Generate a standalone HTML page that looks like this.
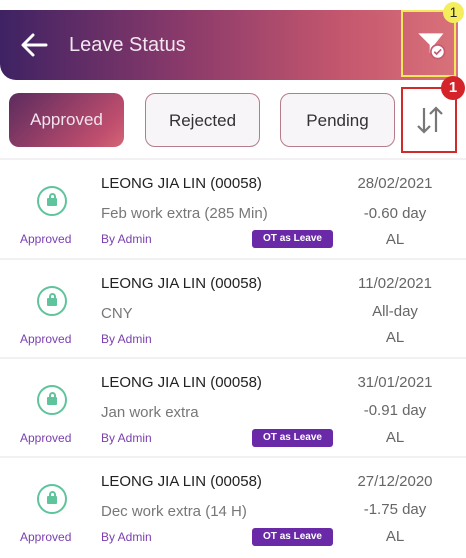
<!DOCTYPE html>
<html><head><meta charset="utf-8"><style>
*{margin:0;padding:0;box-sizing:border-box}
body{width:466px;height:557px;background:#fff;font-family:"Liberation Sans",sans-serif;position:relative;overflow:hidden}
.hdr{position:absolute;left:0;top:10px;width:458px;height:70px;border-radius:0 0 0 16px;background:linear-gradient(90deg,#3e2263 0%,#8a3a6a 40%,#c5576e 75%,#d9727a 100%)}
.hdr .t{position:absolute;left:69px;top:24px;color:#f2e6f0;font-size:20px}
.fbox{position:absolute;left:401px;top:10px;width:55px;height:67px;border:2.5px solid #f2e85c}
.b1{position:absolute;left:443px;top:2px;width:21px;height:21px;border-radius:50%;background:#f4ee5c;color:#222;font-size:14px;text-align:center;line-height:21px}
.btn{position:absolute;top:93px;height:54px;width:115px;border-radius:10px;font-size:17px;text-align:center;line-height:54px;color:#333;border:1.5px solid #b57c8c;background:#f7f5f7}
.btn.a{background:linear-gradient(135deg,#5c2b5e,#c04e6e 80%,#d26775);color:#f3e4ee;border:none}
.sbox{position:absolute;left:401px;top:87px;width:56px;height:66px;border:2.5px solid #d02a2a}
.b2{position:absolute;left:441px;top:76px;width:24px;height:24px;border-radius:50%;background:#d4242a;color:#fff;font-size:15px;font-weight:bold;text-align:center;line-height:24px}
.sep{position:absolute;left:0;width:466px;height:2px;background:#f2f0f2}
.row{position:absolute;left:0;width:466px;height:99px}
.lock{position:absolute;left:37px;top:25px;width:30px;height:30px;border-radius:50%;border:2.5px solid #5fc49c}
.lock i{position:absolute;left:8px;top:10px;width:10px;height:8px;background:#5fc49c;border-radius:1px}
.lock b{position:absolute;left:9.5px;top:5px;width:7px;height:7px;border:2px solid #5fc49c;border-bottom:none;border-radius:4px 4px 0 0}
.st{position:absolute;left:20px;top:71px;font-size:12px;color:#7a3fb0}
.nm{position:absolute;left:101px;top:14px;font-size:15px;color:#222}
.ds{position:absolute;left:101px;top:44px;font-size:15px;color:#777}
.by{position:absolute;left:101px;top:71px;font-size:12px;color:#7a3fb0}
.ot{position:absolute;left:252px;top:69px;width:81px;height:18px;background:#6a2aa8;color:#fff;font-size:10px;font-weight:bold;border-radius:3px;text-align:center;line-height:18px}
.r{position:absolute;right:26px;text-align:center;width:90px;font-size:15px;color:#666}
</style></head><body>
<div class="hdr"><svg style="position:absolute;left:20px;top:22px" width="28" height="26" viewBox="0 0 28 26"><path d="M26 13H4M13 3L3 13l10 10" stroke="#fff" stroke-width="3" fill="none" stroke-linecap="round" stroke-linejoin="round"/></svg><div class="t">Leave Status</div>
<svg style="position:absolute;left:416px;top:20px" width="32" height="32" viewBox="0 0 28 28"><path d="M2 3h22l-8 10v10l-4-3v-7z" fill="#fff"/><circle cx="19" cy="19" r="6" fill="#fff" stroke="#c85a70" stroke-width="1.5"/><path d="M16 19l2 2 4-4" stroke="#c85a70" stroke-width="1.5" fill="none"/></svg></div>
<div class="fbox"></div><div class="b1">1</div>
<div class="btn a" style="left:9px">Approved</div>
<div class="btn" style="left:145px">Rejected</div>
<div class="btn" style="left:280px">Pending</div>
<div class="sbox"><svg style="position:absolute;left:13px;top:16px" width="28" height="30" viewBox="0 0 28 30"><path d="M8 3v24M2 21l6 6 6-6M20 27V3M14 9l6-6 6 6" stroke="#777" stroke-width="2.2" fill="none"/></svg></div><div class="b2">1</div>
<div class="sep" style="top:158px"></div>
<div class="row" style="top:161px"><div class="lock"><b></b><i></i></div><div class="st">Approved</div><div class="nm">LEONG JIA LIN (00058)</div><div class="ds">Feb work extra (285 Min)</div><div class="by">By Admin</div><div class="ot">OT as Leave</div><div class="r" style="top:14px">28/02/2021</div><div class="r" style="top:44px">-0.60 day</div><div class="r" style="top:70px">AL</div></div>
<div class="sep" style="top:258px"></div>
<div class="row" style="top:261px"><div class="lock"><b></b><i></i></div><div class="st">Approved</div><div class="nm">LEONG JIA LIN (00058)</div><div class="ds">CNY</div><div class="by">By Admin</div><div class="r" style="top:14px">11/02/2021</div><div class="r" style="top:42px">All-day</div><div class="r" style="top:68px">AL</div></div>
<div class="sep" style="top:357px"></div>
<div class="row" style="top:360px"><div class="lock"><b></b><i></i></div><div class="st">Approved</div><div class="nm">LEONG JIA LIN (00058)</div><div class="ds">Jan work extra</div><div class="by">By Admin</div><div class="ot">OT as Leave</div><div class="r" style="top:14px">31/01/2021</div><div class="r" style="top:42px">-0.91 day</div><div class="r" style="top:69px">AL</div></div>
<div class="sep" style="top:456px"></div>
<div class="row" style="top:459px"><div class="lock"><b></b><i></i></div><div class="st">Approved</div><div class="nm">LEONG JIA LIN (00058)</div><div class="ds">Dec work extra (14 H)</div><div class="by">By Admin</div><div class="ot">OT as Leave</div><div class="r" style="top:14px">27/12/2020</div><div class="r" style="top:42px">-1.75 day</div><div class="r" style="top:69px">AL</div></div>
</body></html>
